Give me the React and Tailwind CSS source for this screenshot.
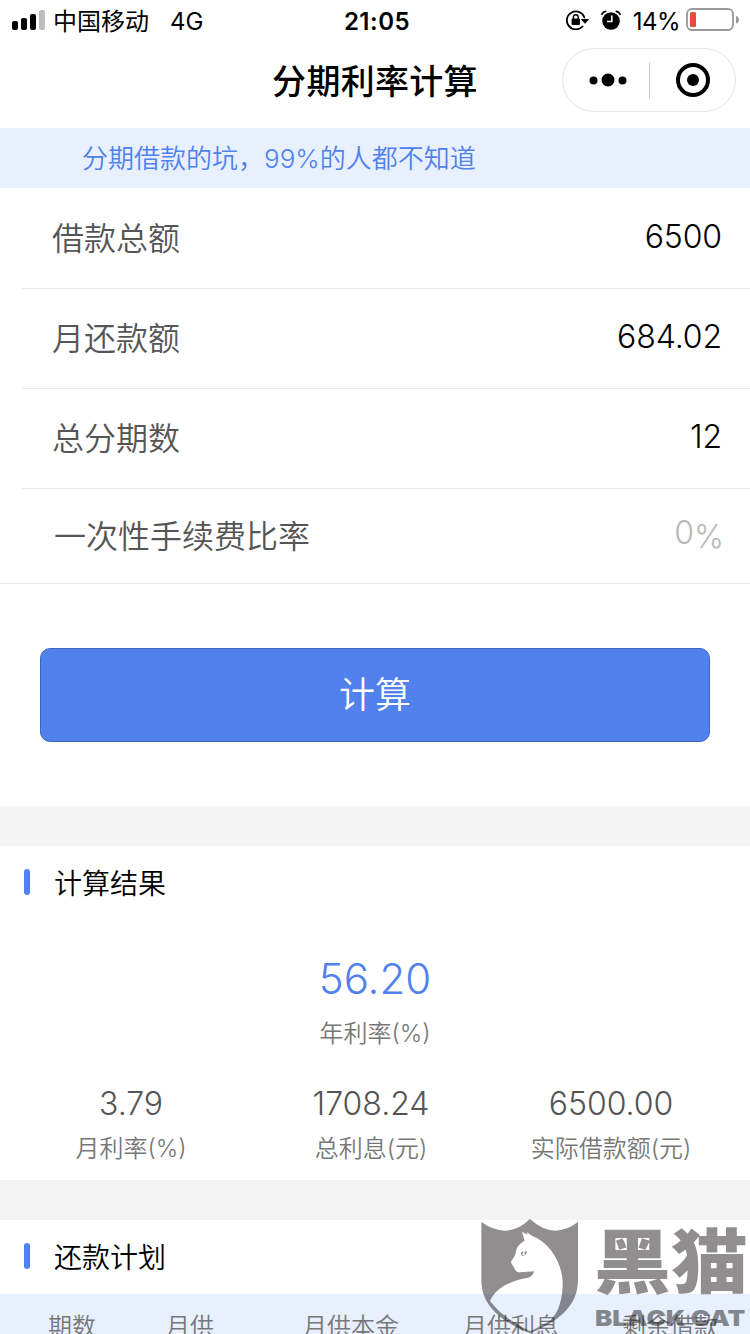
import React from 'react';

const fields = [
  { label: '借款总额', value: '6500' },
  { label: '月还款额', value: '684.02' },
  { label: '总分期数', value: '12' },
];

const results = [
  { value: '3.79', label: '月利率(%)' },
  { value: '1708.24', label: '总利息(元)' },
  { value: '6500.00', label: '实际借款额(元)' },
];

const columns = ['期数', '月供', '月供本金', '月供利息', '剩余借款'];

const SignalIcon = () => (
  <svg width="34" height="20" viewBox="0 0 34 20">
    <rect x="0" y="11" width="6" height="9" rx="2" />
    <rect x="9" y="8" width="6" height="12" rx="2" />
    <rect x="18" y="4" width="6" height="16" rx="2" />
    <rect x="27" y="0" width="6" height="20" rx="2" fill="#bdbdbd" />
  </svg>
);

const RotationLockIcon = () => (
  <svg width="24" height="20" viewBox="0 0 24 20">
    <path d="M18.4 7.500A9 9 0 1 0 16.500 16.500" fill="none" stroke="#000" strokeWidth="1.8" strokeLinecap="round" />
    <path d="M14.800 9h8.400l-4.200 4.800z" />
    <rect x="5.600" y="8.600" width="8.400" height="6.400" rx="1" />
    <path d="M7.4 9V7.200a2.400 2.400 0 0 1 4.800 0V9" fill="none" stroke="#000" strokeWidth="1.4" />
  </svg>
);

const AlarmIcon = () => (
  <svg width="20" height="20" viewBox="0 0 20 20">
    <circle cx="10" cy="11" r="8.8" />
    <path d="M1 4.200A5 5 0 0 1 4.600 1.400M19 4.200A5 5 0 0 0 15.400 1.400" fill="none" stroke="#000" strokeWidth="1.800" strokeLinecap="round" />
    <path d="M10.8 5.500v6H6" fill="none" stroke="#fff" strokeWidth="1.6" />
  </svg>
);

const BatteryIcon = () => (
  <svg width="54" height="24" viewBox="0 0 54 24">
    <rect x="1" y="1" width="46" height="21" rx="5" fill="none" stroke="#999" strokeWidth="1.8" />
    <rect x="4" y="4" width="6" height="15" rx="1.5" fill="#e94b3c" />
    <path d="M50 8c2 .6 3 2 3 3.800s-1 3.200-3 3.800z" fill="#999" />
  </svg>
);

const StatusBar = () => (
  <div className="flex h-10 items-center pr-[10px] pl-3 text-2xl leading-9">
    <div className="flex flex-1 items-center">
      <SignalIcon />
      <span className="ml-[7px] pt-[3px]">中国移动</span>
      <span className="ml-[21px] pt-[3px]">4G</span>
    </div>
    <span className="pt-[3px] pl-0.5 font-semibold tracking-[0.5px]">21:05</span>
    <div className="flex flex-1 items-center justify-end">
      <RotationLockIcon />
      <span className="ml-[11px]">
        <AlarmIcon />
      </span>
      <span className="ml-3 pt-[3px] tracking-[-0.5px]">14%</span>
      <span className="ml-[6px]">
        <BatteryIcon />
      </span>
    </div>
  </div>
);

const NavBar = () => (
  <div className="flex h-22 items-start pr-[14px] pt-2">
    <div className="w-[188px]" />
    <h1 className="flex-1 text-center text-[34px] leading-[67px] font-medium tracking-[0.3px]">分期利率计算</h1>
    <div className="flex h-16 w-[174px] items-center rounded-full border border-[#e5e5e5]">
      <div className="flex w-[86px] items-center justify-center pl-[3px]">
        <svg width="38" height="14" viewBox="0 0 38 14">
          <circle cx="4.500" cy="7.500" r="4" />
          <circle cx="19" cy="7" r="6.500" />
          <circle cx="33.500" cy="7.500" r="4" />
        </svg>
      </div>
      <div className="h-[37px] w-px bg-[#ccc]" />
      <div className="flex w-[85px] items-center justify-center">
        <svg width="34" height="34" viewBox="0 0 34 34">
          <circle cx="17" cy="17" r="15" fill="none" stroke="#000" strokeWidth="4" />
          <circle cx="17" cy="17" r="6" />
        </svg>
      </div>
    </div>
  </div>
);

const SectionTitle = ({ children }) => (
  <div className="flex h-[74px] items-center pl-6">
    <span className="mb-[2px] h-[26px] w-[6px] rounded-full bg-[#5081ed]" />
    <h2 className="ml-6 pt-[3px] text-[28px] leading-[71px] font-[350]">{children}</h2>
  </div>
);

// Shield with the cat cut out of it, next to the brand name
const Watermark = () => (
  <div className="absolute top-[1218px] left-[480px] flex h-[116px] w-[270px] overflow-hidden text-[#231f20] opacity-50">
    <svg className="shrink-0" width="100" height="116" viewBox="30 24 300 348" fill="currentColor">
      <path
        fillRule="evenodd"
        d="M34 36Q112 92 180 27Q250 92 324 36V210C324 290 262 336 180 370C98 336 34 290 34 210Z
           M156 65L164 92C150 100 140 110 138 124C137 136 130 144 123 155C124 164 131 168 133 175C136 184 142 188 152 187L192 184C190 194 185 200 174 203C130 211 82 228 60 272C88 312 132 340 181 364C204 352 222 344 242 330C268 306 279 260 278 214C275 158 240 98 187 78L170 66L173 74Z"
      />
      <path d="M152 128L160 123L157 134L162 137L156 138ZM163 126L171 123Q171 133 162 137Q167 131 163 126Z" />
    </svg>
    <div className="ml-[14px] flex flex-col items-start">
      <span className="mt-[8px] origin-center scale-y-92 text-[77px] leading-[72px] font-black whitespace-nowrap">黑猫</span>
      <span className="ml-px origin-left scale-x-118 text-[22px] leading-10 font-black whitespace-nowrap">BLACK CAT</span>
    </div>
  </div>
);

const App = () => {
  return (
    <div className="relative h-[1334px] w-[750px] overflow-hidden bg-white font-['Inter','Noto_Sans_CJK_SC',sans-serif] text-black">
      <StatusBar />
      <NavBar />

      <div className="h-[60px] bg-[#e8f0fe] pl-[82px] text-[26px] leading-[62px] font-[350] text-[#5081ed]">
        分期借款的坑，<span className="font-light">99%</span>的人都不知道
      </div>

      {/* Loan form */}
      <div className="border-b border-[#e9e9e9] pt-px">
        {fields.map((field) => (
          <div
            key={field.label}
            className="ml-[22px] flex justify-between border-b border-[#e9e9e9] pr-7 pl-[30px] text-[32px]"
          >
            <span className="h-[99px] leading-[100px] font-[350] text-[#555]">{field.label}</span>
            <span className="leading-[96px] font-[350] tracking-[-0.1px]">{field.value}</span>
          </div>
        ))}
        <div className="flex h-[94px] justify-between pr-[26px] pl-[54px] text-[32px]">
          <span className="leading-[96px] font-[350] text-[#555]">一次性手续费比率</span>
          <div className="flex font-light text-[#b8b8b8]">
            <span className="leading-[88px]">0</span>
            <span className="text-[32px] leading-[95px]">%</span>
          </div>
        </div>
      </div>

      <div className="px-10 py-16">
        <button className="block h-[94px] w-full rounded-[10px] border border-[#4067be] bg-[#5081ed] text-4xl leading-[90px] font-[350] text-white">
          计算
        </button>
      </div>

      {/* Results */}
      <div className="h-10 bg-[#f3f3f3]" />
      <div className="h-[334px]">
        <SectionTitle>计算结果</SectionTitle>
        <div className="mt-7 text-center">
          <div className="text-[42px] leading-[62px] font-light text-[#5081ed]">56.20</div>
          <div className="text-2xl leading-12 font-[350] text-[#777]">年利率(%)</div>
        </div>
        <div className="mt-[23px] grid grid-cols-3 pr-[19px] pl-[11px] text-center">
          {results.map((item) => (
            <div key={item.label}>
              <div className="text-[32px] leading-[46px] font-light text-[#555]">{item.value}</div>
              <div className="text-2xl leading-11 font-[350] text-[#777]">{item.label}</div>
            </div>
          ))}
        </div>
      </div>

      {/* Repayment plan */}
      <div className="h-10 bg-[#f3f3f3]" />
      <SectionTitle>还款计划</SectionTitle>
      <div className="grid h-10 grid-cols-[118px_137px_160px_159px_auto] bg-[#e8f0fe] pl-12 text-2xl leading-[66px] font-[350] whitespace-nowrap text-[#777]">
        {columns.map((name) => (
          <span key={name}>{name}</span>
        ))}
      </div>

      <Watermark />
    </div>
  );
};

export default App;
